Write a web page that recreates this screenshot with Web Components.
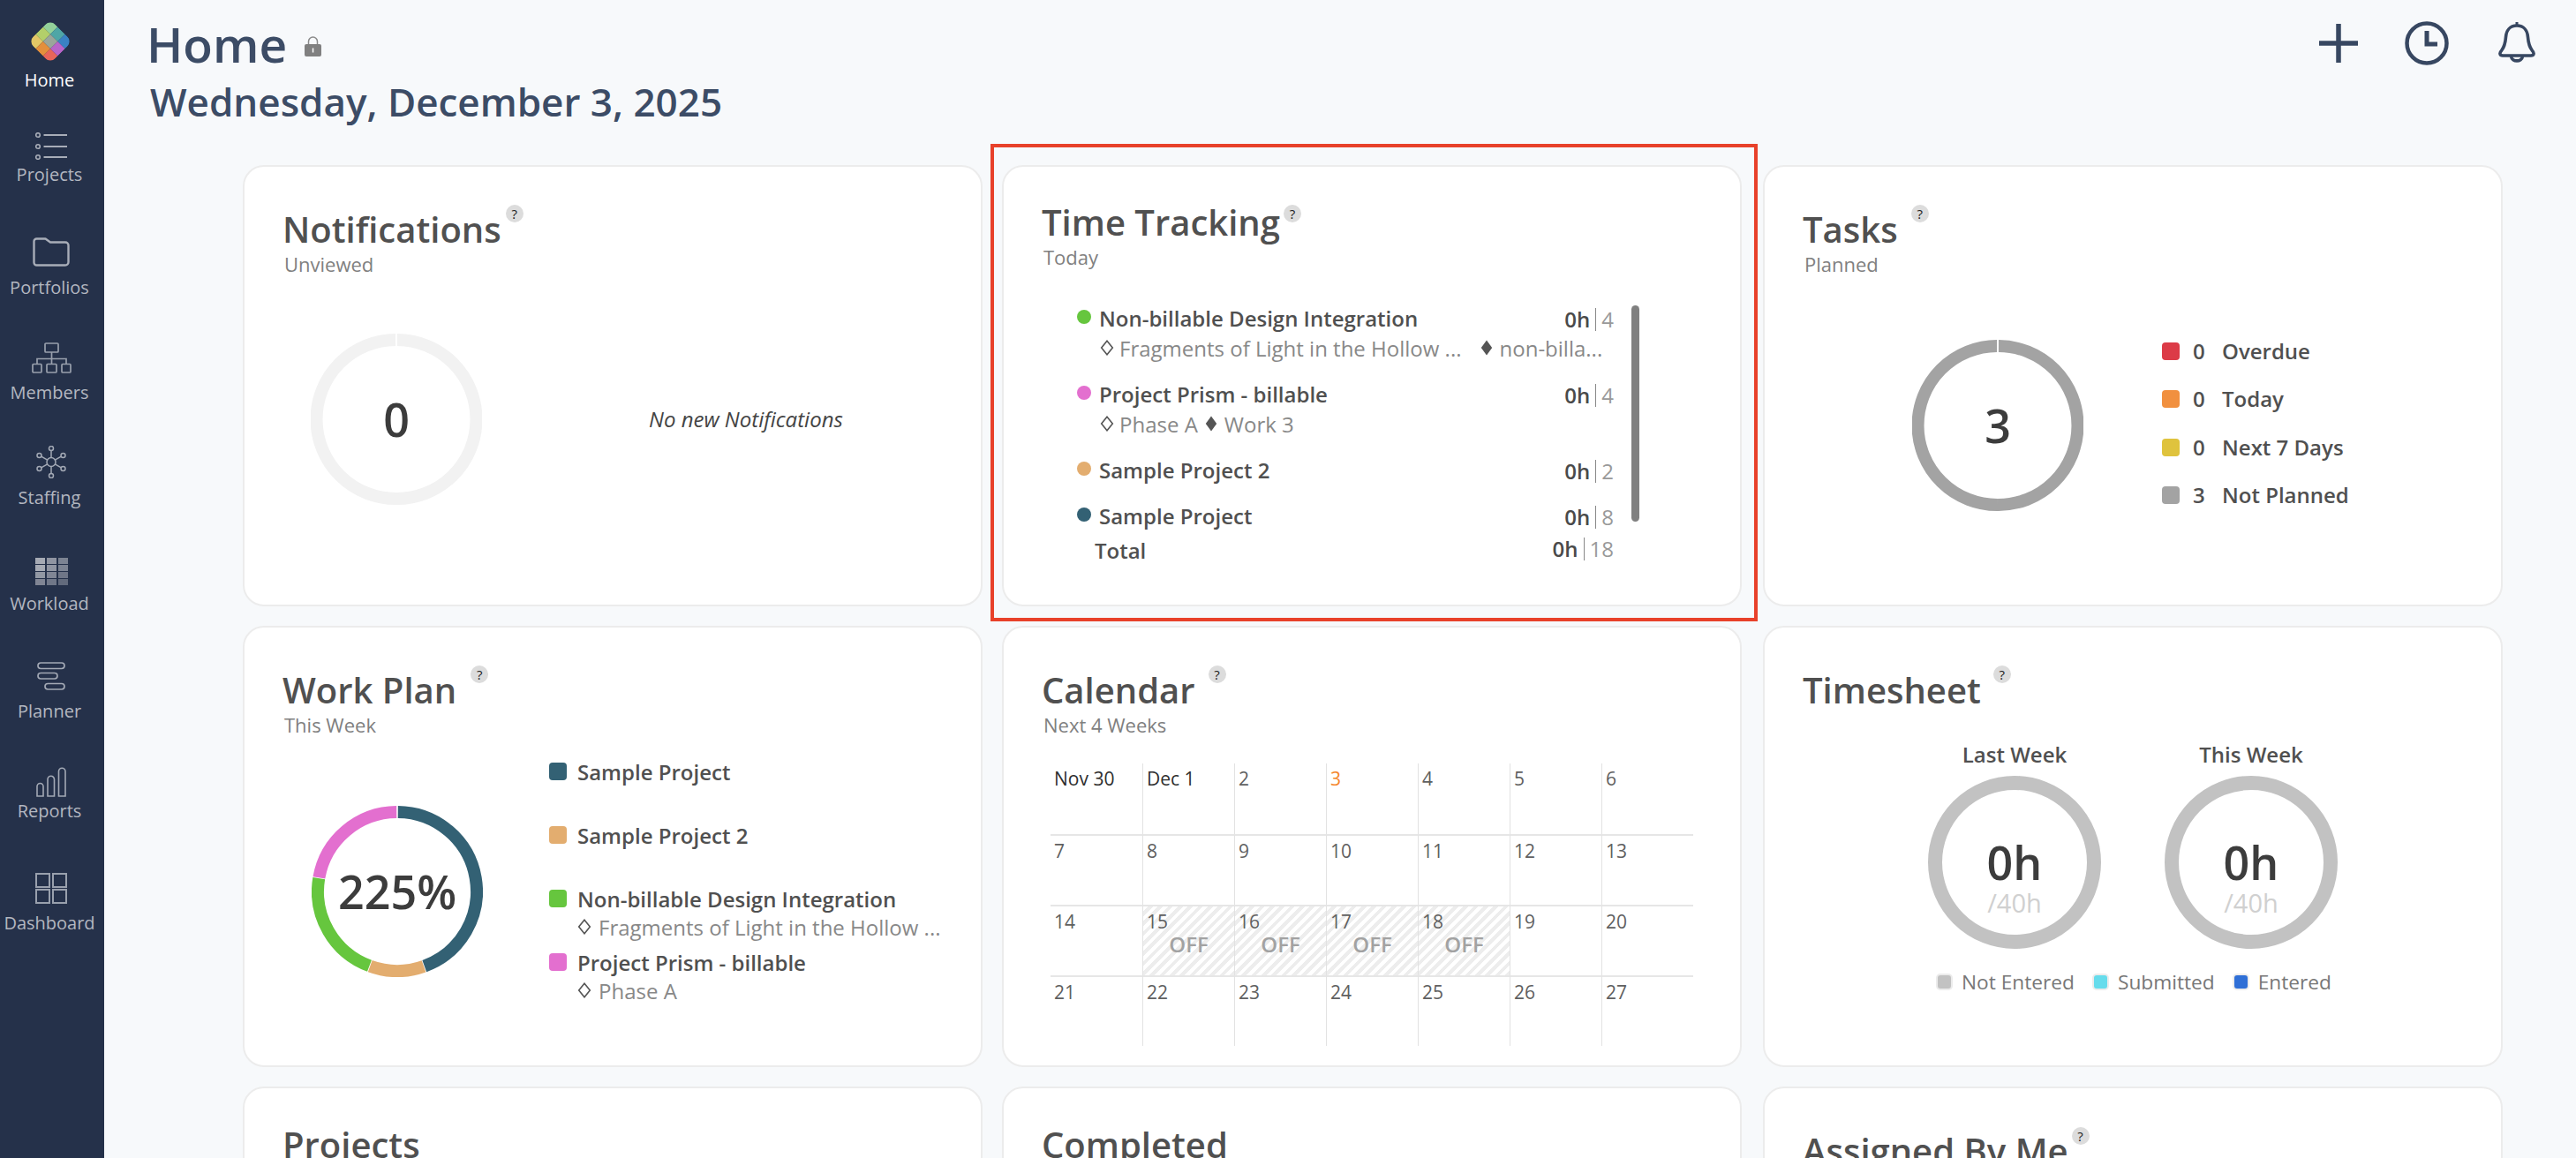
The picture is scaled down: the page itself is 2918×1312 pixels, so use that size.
<!DOCTYPE html>
<html lang="en">
<head>
<meta charset="utf-8">
<title>Home</title>
<style>
  html, body { margin: 0; height: 100%; overflow: hidden; background: #f7f9fb; }
  body { font-family: "Open Sans", "Liberation Sans", sans-serif; color: #444; }
</style>
</head>
<body>
<app-shell>
  <nav-rail slot="nav">
    <nav-item label="Home" active top="22" gap="6">
      <svg style="margin-left:-3px" width="50" height="50" viewBox="0 0 50 50">
        <defs><clipPath id="lg"><rect x="-17.6" y="-17.6" width="35.2" height="35.2" rx="8"/></clipPath></defs>
        <g transform="translate(25 25) rotate(45)" clip-path="url(#lg)">
          <rect x="-17.6" y="-17.6" width="11.7" height="11.7" fill="#93d19a"/><rect x="-5.9" y="-17.6" width="11.8" height="11.7" fill="#4fa6a6"/><rect x="5.9" y="-17.6" width="11.7" height="11.7" fill="#3a82c4"/>
          <rect x="-17.6" y="-5.9" width="11.7" height="11.8" fill="#b3cf6a"/><rect x="-5.9" y="-5.9" width="11.8" height="11.8" fill="#9aa69a"/><rect x="5.9" y="-5.9" width="11.7" height="11.8" fill="#b865c9"/>
          <rect x="-17.6" y="5.9" width="11.7" height="11.7" fill="#e3c766"/><rect x="-5.9" y="5.9" width="11.8" height="11.7" fill="#e38f3c"/><rect x="5.9" y="5.9" width="11.7" height="11.7" fill="#e8655a"/>
        </g>
      </svg>
    </nav-item>
    <nav-item label="Projects" top="46" gap="4">
      <svg width="36" height="31" viewBox="0 0 36 31" fill="none" stroke="#a8adb8" stroke-width="1.6">
        <circle cx="3" cy="3" r="2.3"/><circle cx="3" cy="16" r="2.3"/><circle cx="3" cy="28" r="2.3"/>
        <path d="M9.5 3H36M9.5 16H36M9.5 28H36" stroke-width="2"/>
      </svg>
    </nav-item>
    <nav-item label="Portfolios" top="58" gap="11">
      <svg width="42" height="33" viewBox="0 0 42 33" fill="none" stroke="#a8adb8" stroke-width="2.4">
        <path d="M1.5 4.5a3 3 0 0 1 3-3h10l5.500 4h17a3.500 3.500 0 0 1 3.500 3.500v19a3.500 3.500 0 0 1-3.500 3.500H4.500a3 3 0 0 1-3-3z" stroke-linejoin="round"/>
      </svg>
    </nav-item>
    <nav-item label="Members" top="49" gap="9">
      <svg width="45" height="35" viewBox="0 0 45 35" fill="none" stroke="#99a0ad" stroke-width="1.700">
        <rect x="15" y="1" width="15" height="10" rx="1"/>
        <path d="M22.500 11v13M6 24v-5.500h33V24"/>
        <rect x="1" y="24.500" width="10" height="9.500" rx="1"/><rect x="17" y="24.500" width="11" height="9.500" rx="1"/><rect x="34" y="24.500" width="10" height="9.500" rx="1"/>
      </svg>
    </nav-item>
    <nav-item label="Staffing" top="47" gap="9">
      <svg width="34" height="37" viewBox="0 0 34 37" fill="none" stroke="#a3a9b5" stroke-width="1.500">
        <circle cx="17" cy="18.500" r="5"/>
        <circle cx="17" cy="3" r="2.500"/><circle cx="17" cy="34" r="2.500"/>
        <circle cx="3.500" cy="11" r="2.500"/><circle cx="30.500" cy="11" r="2.500"/><circle cx="3.500" cy="26" r="2.500"/><circle cx="30.500" cy="26" r="2.500"/>
        <path d="M17 5.500v8M17 23.500v8M5.700 12.200l7 4M28.300 12.200l-7 4M5.700 24.800l7-4M28.300 24.800l-7-4"/>
      </svg>
    </nav-item>
    <nav-item label="Workload" top="55" gap="8">
      <svg width="37" height="31" viewBox="0 0 37 31">
        <g fill="#a6aab4"><rect width="11" height="7"/><rect y="8" width="11" height="7"/><rect y="16" width="11" height="7" opacity=".85"/><rect y="24" width="11" height="7" opacity=".7"/></g>
        <g fill="#9095a2"><rect x="13" width="11" height="7"/><rect x="13" y="8" width="11" height="7"/><rect x="13" y="16" width="11" height="7" opacity=".85"/><rect x="13" y="24" width="11" height="7" opacity=".7"/></g>
        <g fill="#7c8392"><rect x="26" width="11" height="7"/><rect x="26" y="8" width="11" height="7"/><rect x="26" y="16" width="11" height="7" opacity=".85"/><rect x="26" y="24" width="11" height="7" opacity=".7"/></g>
      </svg>
    </nav-item>
    <nav-item label="Planner" top="53" gap="11">
      <svg width="32" height="32" viewBox="0 0 32 32" fill="none" stroke="#a3a9b5" stroke-width="1.700">
        <rect x="1" y="1" width="30" height="6.500" rx="3.250"/><rect x="1" y="12.500" width="22" height="6.500" rx="3.250"/><rect x="9" y="24.500" width="22" height="6.500" rx="3.250"/>
      </svg>
    </nav-item>
    <nav-item label="Reports" top="50" gap="3">
      <svg width="34" height="34" viewBox="0 0 34 34" fill="none" stroke="#a3a9b5" stroke-width="1.600">
        <path d="M1 33V22a3.500 3.500 0 0 1 7 0v11zM13 33V14a3.750 3.750 0 0 1 7.500 0v19zM25.500 33V5a3.750 3.750 0 0 1 7.500 0v28z"/>
      </svg>
    </nav-item>
    <nav-item label="Dashboard" top="57" gap="9">
      <svg width="36" height="35" viewBox="0 0 36 35" fill="none" stroke="#99a0ad" stroke-width="2">
        <rect x="1" y="1" width="15" height="15"/><rect x="20" y="1" width="15" height="15"/><rect x="1" y="19" width="15" height="15"/><rect x="20" y="19" width="15" height="15"/>
      </svg>
    </nav-item>
  </nav-rail>

  <page-head slot="head" title-text="Home" date="Wednesday, December 3, 2025"></page-head>

  <dash-card heading="Notifications" sub="Unviewed" help-gap="5" help-y="-1">
    <notifications-body></notifications-body>
  </dash-card>
  <dash-card style="margin:0 1px 0 -1px" heading="Time Tracking" sub="Today" head-top="38" help-gap="4" help-y="7">
    <time-tracking></time-tracking>
  </dash-card>
  <dash-card heading="Tasks" sub="Planned" help-gap="15" help-y="-1">
    <tasks-body></tasks-body>
  </dash-card>
  <dash-card heading="Work Plan" sub="This Week" help-gap="16" help-y="-1">
    <work-plan></work-plan>
  </dash-card>
  <dash-card style="margin:0 1px 0 -1px" heading="Calendar" sub="Next 4 Weeks" help-gap="15" help-y="-1">
    <mini-calendar></mini-calendar>
  </dash-card>
  <dash-card heading="Timesheet" help-gap="14" help-y="-1">
    <time-sheet></time-sheet>
  </dash-card>
  <dash-card heading="Projects" head-top="39" no-help></dash-card>
  <dash-card style="margin:0 1px 0 -1px" heading="Completed" head-top="39" no-help></dash-card>
  <dash-card heading="Assigned By Me" help-gap="4" help-y="0"></dash-card>

  <focus-frame slot="overlay"></focus-frame>
</app-shell>

<script>
const define = (name, render) => {
  customElements.define(name, class extends HTMLElement {
    constructor() {
      super();
      this.attachShadow({ mode: 'open' });
    }
    connectedCallback() {
      this.shadowRoot.innerHTML = render(this);
    }
  });
};

const DIAMOND_OPEN = `<svg width="16" height="18" viewBox="0 0 16 18" style="flex:none"><path d="M8 1.200 14.300 9 8 16.800 1.700 9z" fill="none" stroke="#555" stroke-width="1.600"/></svg>`;
const DIAMOND_FILLED = `<svg width="14" height="18" viewBox="0 0 14 18" style="flex:none"><path d="M7 .5 13.200 9 7 17.500.8 9z" fill="#555"/></svg>`;

define('app-shell', () => `
  <style>
    :host { display: flex; width: 2918px; height: 1312px; overflow: hidden; position: relative; background: #f7f9fb; }
    main { flex: 1; min-width: 0; }
    .grid {
      display: grid;
      grid-template-columns: repeat(3, 838px);
      grid-auto-rows: 500px;
      column-gap: 23px;
      row-gap: 22px;
      margin-left: 157px;
    }
  </style>
  <slot name="nav"></slot>
  <main>
    <slot name="head"></slot>
    <div class="grid"><slot></slot></div>
  </main>
  <slot name="overlay"></slot>
`);

define('nav-rail', () => `
  <style>
    :host { display: flex; flex-direction: column; flex: none; box-sizing: border-box; width: 118px; height: 1312px; padding-right: 6px; background: #25314a; }
  </style>
  <slot></slot>
`);

define('nav-item', (el) => `
  <style>
    :host { display: flex; flex-direction: column; align-items: center; margin-top: ${el.getAttribute('top')}px; }
    .icon { display: flex; height: auto; margin: 0 0 ${el.getAttribute('gap')}px 4px; }
    ::slotted(svg) { display: block; }
    .label { font-size: 20px; line-height: 26px; color: ${el.hasAttribute('active') ? '#fff' : '#b3b7c0'}; white-space: nowrap; }
  </style>
  <div class="icon"><slot></slot></div>
  <div class="label">${el.getAttribute('label')}</div>
`);

define('page-head', (el) => `
  <style>
    :host { display: block; box-sizing: border-box; height: 187px; padding: 20px 0 0 48px; color: #3c4c66; position: relative; }
    .top { display: flex; font-size: 55px; line-height: 60px; font-weight: 600; }
    .top svg { margin: 20px 0 0 20px; }
    .date { margin: 5px 0 0 4px; font-size: 44px; line-height: 60px; font-weight: 600; }
    .tools { display: flex; align-items: center; position: absolute; right: 46px; top: 25px; height: 48px; }
  </style>
  <div class="top">
    <span>${el.getAttribute('title-text')}</span>
    <svg width="19" height="24" viewBox="0 0 19 24"><path d="M4.500 11V7a5 5 0 0 1 10 0v4" fill="none" stroke="#8a8a8a" stroke-width="1.500"/><rect y="10" width="19" height="14" rx="2" fill="#808080"/><rect x="8.800" y="14.500" width="1.500" height="5" fill="#fff"/></svg>
  </div>
  <div class="date">${el.getAttribute('date')}</div>
  <div class="tools">
    <svg width="44" height="44" viewBox="0 0 44 44" fill="none" stroke="#374761" stroke-width="5.500"><path d="M22 0v44M0 22h44"/></svg>
    <svg style="margin-left:53px" width="50" height="50" viewBox="0 0 50 50" fill="none" stroke="#374761" stroke-width="4.500"><circle cx="25" cy="25" r="22.500"/><path d="M25 11v15h12" stroke-width="5"/></svg>
    <svg style="margin-left:56px" width="42" height="48" viewBox="0 0 42 48" fill="none" stroke="#374761" stroke-width="3.600" stroke-linejoin="round"><path d="M21 4C13 4 9 10 8.500 17c-.5 7-1.500 11-5 15.500C1 35 1.500 38 5 38h32c3.500 0 4-3 1.500-5.500-3.500-4.500-4.500-8.500-5-15.500C33 10 29 4 21 4z"/><path d="M21 0v4" stroke-width="3"/><path d="M14.500 39c1 6.500 12 6.500 13 0"/></svg>
  </div>
`);

define('dash-card', (el) => {
  const sub = el.getAttribute('sub');
  const help = el.hasAttribute('no-help') ? '' : `<span class="help" style="margin:${el.getAttribute('help-y')}px 0 0 ${el.getAttribute('help-gap')}px">?</span>`;
  return `
    <style>
      :host { display: block; box-sizing: border-box; background: #fff; border: 2px solid #ececec; border-radius: 24px; padding: ${(+el.getAttribute('head-top') || 46) - 2}px 0 0 43px; min-width: 0; }
      .title { display: flex; align-items: flex-start; height: 50px; }
      h2 { margin: 0; font-size: 40px; line-height: 54px; font-weight: 600; color: #505050; white-space: nowrap; }
      .help { flex: none; width: 20px; height: 20px; border-radius: 50%; background: #dcdcdc; color: #222; font-size: 15px; line-height: 20px; text-align: center; }
      .sub { margin-left: 2px; height: 30px; font-size: 22px; line-height: 32px; color: #808080; }
    </style>
    <div class="title"><h2>${el.getAttribute('heading')}</h2>${help}</div>
    ${sub ? `<div class="sub">${sub}</div>` : ''}
    <slot></slot>
  `;
});

const arc = (c, r, from, to) => {
  const pt = (a) => {
    const t = (a - 90) * Math.PI / 180;
    return `${(c + r * Math.cos(t)).toFixed(2)} ${(c + r * Math.sin(t)).toFixed(2)}`;
  };
  return `M${pt(from)}A${r} ${r} 0 ${to - from > 180 ? 1 : 0} 1 ${pt(to)}`;
};

// segments attr: "color:from:to,color:from:to"
define('ring-chart', (el) => {
  const size = +el.getAttribute('size') || 194;
  const stroke = +el.getAttribute('stroke') || 14;
  const c = size / 2;
  const r = c - stroke / 2;
  const paths = el.getAttribute('segments').split(',').map((s) => {
    const [color, from, to] = s.split(':');
    return `<path d="${arc(c, r, +from, +to)}" fill="none" stroke="${color}" stroke-width="${stroke}"/>`;
  }).join('');
  return `
    <style>
      :host { display: grid; flex: none; width: ${size}px; height: ${size}px; }
      svg, .mid { grid-area: 1 / 1; }
      svg { display: block; }
      .mid { display: flex; flex-direction: column; align-items: center; justify-content: center; color: #3c3c3c; font-size: 52px; line-height: 60px; font-weight: 600; }
    </style>
    <svg width="${size}" height="${size}" viewBox="0 0 ${size} ${size}">${paths}</svg>
    <div class="mid"><slot></slot></div>
  `;
});

define('notifications-body', () => `
  <style>
    :host { display: flex; margin: 65px 0 0 32px; align-items: center; }
    p { margin: 0 0 0 189px; font-size: 24px; line-height: 30px; font-style: italic; color: #444; }
  </style>
  <ring-chart segments="#f2f2f2:0.6:180,#f2f2f2:180:359.4">0</ring-chart>
  <p>No new Notifications</p>
`);

define('tasks-body', () => `
  <style>
    :host { display: flex; margin: 72px 0 0 124px; align-items: flex-start; }
    ul { list-style: none; margin: -4px 0 0 89px; padding: 0; display: flex; flex-direction: column; gap: 20.300px; font-size: 24px; line-height: 34px; font-weight: 600; color: #505050; }
    li { display: flex; align-items: center; }
    i { width: 20px; height: 20px; border-radius: 4px; margin-right: 15px; }
    b { font-weight: 600; width: 33px; }
  </style>
  <ring-chart segments="#a3a3a3:0.6:180,#a3a3a3:180:359.4">3</ring-chart>
  <ul>
    <li><i style="background:#dc3b47"></i><b>0</b>Overdue</li>
    <li><i style="background:#f1903f"></i><b>0</b>Today</li>
    <li><i style="background:#dfc33d"></i><b>0</b>Next 7 Days</li>
    <li><i style="background:#a3a3a3"></i><b>3</b>Not Planned</li>
  </ul>
`);

define('hours-cell', (el) => `
  <style>
    :host { display: flex; align-items: center; justify-content: flex-end; font-size: 24px; line-height: 34px; font-weight: 600; color: #4a4a4a; }
    i { width: 1px; height: 26px; background: #888; margin: 0 6px; }
    span { font-weight: 400; color: #999; }
  </style>
  0h<i></i><span>${el.getAttribute('plan')}</span>
`);

define('time-row', (el) => {
  const extra = el.getAttribute('sub2');
  return `
    <style>
      :host { display: block; }
      .main { display: flex; align-items: center; height: 34px; font-size: 24px; font-weight: 600; color: #505050; }
      .dot { width: 16px; height: 16px; border-radius: 50%; margin: -2px 9px 0 0; background: ${el.getAttribute('color')}; }
      .name { flex: 1; }
      hours-cell { margin-top: 3px; }
      .sub { display: flex; align-items: center; height: 36px; margin: -1px 0 1px 26px; font-size: 24px; color: #888; white-space: nowrap; }
      .sub span { margin-left: 6px; }
      .sub span + svg { margin-left: ${el.getAttribute('sub2-gap') || 8}px; }
      .sub span + svg + span { margin-left: 8px; }
    </style>
    <div class="main"><i class="dot"></i><span class="name">${el.getAttribute('name')}</span><hours-cell plan="${el.getAttribute('plan')}"></hours-cell></div>
    ${el.getAttribute('sub1') ? `<div class="sub">${DIAMOND_OPEN}<span>${el.getAttribute('sub1')}</span>${extra ? `${DIAMOND_FILLED}<span>${extra}</span>` : ''}</div>` : ''}
  `;
});

define('time-tracking', () => `
  <style>
    :host { display: block; position: relative; width: 608px; margin: 38px 0 0 40px; }
    .rows { display: flex; flex-direction: column; gap: 16px; }
    .short { height: 36px; }
    .total { display: flex; align-items: center; justify-content: space-between; height: 34px; margin: 3px 0 0 20px; font-size: 24px; font-weight: 600; color: #505050; }
    .total hours-cell { margin-top: -3px; }
    .bar { position: absolute; left: 628px; top: 3px; width: 9px; height: 245px; border-radius: 5px; background: #808080; }
  </style>
  <div class="rows">
    <time-row color="#66c63e" name="Non-billable Design Integration" plan="4" sub1="Fragments of Light in the Hollow ..." sub2="non-billa..." sub2-gap="21"></time-row>
    <time-row color="#e36fcf" name="Project Prism - billable" plan="4" sub1="Phase A" sub2="Work 3"></time-row>
    <time-row class="short" color="#e3ad6f" name="Sample Project 2" plan="2"></time-row>
    <time-row class="short" color="#336174" name="Sample Project" plan="8"></time-row>
  </div>
  <div class="total"><span>Total</span><hours-cell plan="18"></hours-cell></div>
  <div class="bar"></div>
`);

define('plan-item', (el) => `
  <style>
    :host { display: block; }
    .main { display: flex; align-items: center; height: 34px; font-size: 24px; font-weight: 600; color: #505050; white-space: nowrap; }
    i { width: 20px; height: 20px; border-radius: 4px; margin-right: 12px; background: ${el.getAttribute('color')}; }
    .sub { display: flex; align-items: center; height: 30px; margin-left: 32px; font-size: 24px; color: #888; white-space: nowrap; }
    .sub span { margin-left: 8px; }
  </style>
  <div class="main"><i></i>${el.getAttribute('name')}</div>
  ${el.getAttribute('sub') ? `<div class="sub">${DIAMOND_OPEN}<span>${el.getAttribute('sub')}</span></div>` : ''}
`);

define('work-plan', () => `
  <style>
    :host { display: flex; align-items: flex-start; margin: 22px 0 0 33px; }
    ring-chart { margin-top: 56px; }
    .legend { margin-left: 75px; }
  </style>
  <ring-chart segments="#336174:0.5:160,#e3ad6f:160.5:200,#66c63e:200.5:279.5,#e36fcf:280:359.500">225%</ring-chart>
  <div class="legend">
    <plan-item color="#336174" name="Sample Project" style="margin-bottom:38px"></plan-item>
    <plan-item color="#e3ad6f" name="Sample Project 2" style="margin-bottom:38px"></plan-item>
    <plan-item color="#66c63e" name="Non-billable Design Integration" sub="Fragments of Light in the Hollow ..." style="margin-bottom:8px"></plan-item>
    <plan-item color="#e36fcf" name="Project Prism - billable" sub="Phase A"></plan-item>
  </div>
`);

define('mini-calendar', () => {
  const labels = ['Nov 30', 'Dec 1', '2', '3', '4', '5', '6', '7', '8', '9', '10', '11', '12', '13', '14', '15', '16', '17', '18', '19', '20', '21', '22', '23', '24', '25', '26', '27'];
  const off = ['15', '16', '17', '18'];
  const cells = labels.map((label, i) => {
    const cls = [i % 7 ? 'v' : '', i >= 7 ? 'h' : '', off.includes(label) ? 'off' : '', label === '3' ? 'today' : '', i < 2 ? 'first' : ''].join(' ');
    return `<div class="${cls}"><span>${label}</span>${off.includes(label) ? '<em>OFF</em>' : ''}</div>`;
  }).join('');
  return `
    <style>
      :host { display: grid; grid-template-columns: repeat(7, 104px); grid-auto-rows: 80px; margin: 30px 0 0 10px; width: 728px; font-size: 21px; line-height: 28px; color: #606060; }
      div { box-sizing: border-box; padding: 3px 0 0 4px; }
      .v { border-left: 1px solid #e2e2e2; }
      .h { border-top: 2px solid #e6e6e6; }
      .first { color: #2e2e2e; }
      .today { color: #f5862b; }
      .off { background: repeating-linear-gradient(135deg, #fff 0 4px, #ededed 4px 8px); }
      span { display: block; }
      em { display: block; margin: -2px 0 0 -4px; font-style: normal; font-size: 24px; font-weight: 600; color: #a2a2a2; text-align: center; }
    </style>
    ${cells}
  `;
});

define('week-ring', (el) => `
  <style>
    :host { display: flex; flex-direction: column; align-items: center; width: 196px; }
    .label { height: 41px; font-size: 24px; line-height: 34px; font-weight: 600; color: #505050; }
    ring-chart { align-items: start; }
    b { display: block; font-size: 52px; line-height: 56px; font-weight: 600; color: #3c3c3c; text-align: center; }
    small { display: block; font-size: 29px; line-height: 36px; font-weight: 400; color: #d0d0d0; text-align: center; }
  </style>
  <div class="label">${el.getAttribute('label')}</div>
  <ring-chart size="196" stroke="16" segments="#c2c2c2:0:180,#c2c2c2:180:360"><div style="margin-top:70px"><b>0h</b><small>/40h</small></div></ring-chart>
`);

define('time-sheet', () => `
  <style>
    :host { display: block; margin: 33px 0 0 0; }
    .weeks { display: flex; gap: 72px; margin-left: 142px; }
    .legend { display: flex; align-items: center; margin: 22px 0 0 151px; height: 30px; font-size: 22.700px; color: #777; }
    i { box-sizing: border-box; width: 19px; height: 19px; border: 2px solid #ececec; border-radius: 5px; margin-right: 10px; }
    span { margin-right: 20px; }
  </style>
  <div class="weeks"><week-ring label="Last Week"></week-ring><week-ring label="This Week"></week-ring></div>
  <div class="legend">
    <i style="background:#c2c2c2"></i><span>Not Entered</span>
    <i style="background:#66dcec"></i><span>Submitted</span>
    <i style="background:#2f6fd6"></i><span>Entered</span>
  </div>
`);

define('focus-frame', () => `
  <style>
    :host { display: block; position: absolute; left: 1122px; top: 163px; box-sizing: border-box; width: 869px; height: 541px; border: 4px solid #e8412a; pointer-events: none; }
  </style>
`);
</script>
</body>
</html>
